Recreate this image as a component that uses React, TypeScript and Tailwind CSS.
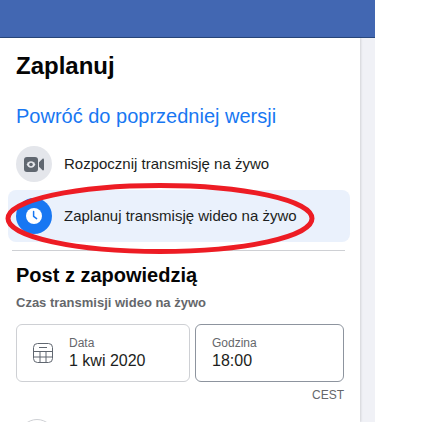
const sans = "font-['Liberation_Sans',Arial,sans-serif]";

function VideoIcon() {
  return (
    <svg width="20" height="15" viewBox="0 0 20 15" aria-hidden="true">
      <rect x="0" y="0" width="14" height="15" rx="3" fill="#606770" />
      <path fill="#e4e6eb" d="M7 4.2c-2.2 0-3.8 1.9-4.4 3.3.6 1.4 2.2 3.3 4.4 3.3s3.8-1.9 4.4-3.3C10.8 6.100 9.200 4.200 7 4.200Z" />
      <circle cx="7" cy="7.500" r="1.800" fill="#606770" />
      <path fill="#606770" d="M15 5.200 18.600 1.800c.6-.5 1.400-.1 1.400.6v10.200c0 .7-.8 1.100-1.400.6L15 9.800Z" />
    </svg>
  );
}

function ClockIcon() {
  return (
    <svg width="16" height="16" viewBox="0 0 16 16" aria-hidden="true">
      <circle cx="8" cy="8" r="8" fill="#ffffff" />
      <path d="M7.600 3.400v5l3 2.200" fill="none" stroke="#1877f2" strokeWidth="1.500" strokeLinecap="round" strokeLinejoin="round" />
    </svg>
  );
}

function CalendarIcon() {
  return (
    <svg width="20" height="20" viewBox="0 0 20 20" fill="none" stroke="#606770" strokeWidth="1" aria-hidden="true">
      <rect x="0.500" y="0.500" width="19" height="19" rx="4" />
      <path d="M6 4.500h8M0.500 8.500h19M0.500 14h19M7 8.500v11M13 8.500v11" />
    </svg>
  );
}

export default function App() {
  return (
    <div className={`${sans} h-[422px] w-[447px] overflow-hidden bg-white`}>
      <div className="h-[38px] w-[375px] border-b border-[#29487d] bg-[#4267b2]" />
      <div className="flex h-[384px] w-[375px] bg-[#f0f1f6]">
        <div className="h-full w-[360px] bg-white pl-2 shadow-[1px_0_2px_rgba(0,0,0,0.12)]">
          <h1 className="ml-2 mt-[14px] text-[24px] font-bold leading-7 text-[#050505]">Zaplanuj</h1>
          <p className="ml-2 mt-6 text-[20px] leading-6 text-[#1877f2]">Powróć do poprzedniej wersji</p>
          <div className="mt-[10px] flex h-[52px] w-[342px] items-center gap-3 pl-2">
            <div className="flex h-9 w-9 items-center justify-center rounded-full bg-[#e4e6eb]">
              <VideoIcon />
            </div>
            <span className="mt-px text-[15px] text-[#1c1e21]">Rozpocznij transmisję na żywo</span>
          </div>
          <div className="relative flex h-[52px] w-[342px] items-center gap-3 rounded-lg bg-[#eaf1fc] pl-2">
            <div className="flex h-9 w-9 items-center justify-center rounded-full bg-[#1877f2]">
              <ClockIcon />
            </div>
            <span className="mt-px text-[15px] text-[#1c1e21]">Zaplanuj transmisję wideo na żywo</span>
            <svg className="absolute -left-[3px] -top-[7px]" width="310" height="71" viewBox="0 0 310 71" aria-hidden="true">
              <ellipse cx="155" cy="35.500" rx="152" ry="33" fill="none" stroke="#ed1c24" strokeWidth="5" />
            </svg>
          </div>
          <div className="ml-1 mt-2 h-px w-[333px] bg-[#ced0d4]" />
          <h2 className="ml-2 mt-[12px] text-[20px] font-bold leading-6 text-[#050505]">Post z zapowiedzią</h2>
          <p className="ml-2 mt-2 text-[13px] font-bold leading-4 text-[#65676b]">Czas transmisji wideo na żywo</p>
          <div className="ml-2 mt-[13px] flex gap-[5px]">
            <div className="flex h-[58px] w-[174px] items-center gap-4 rounded-md border border-[#ced0d4] pl-4">
              <CalendarIcon />
              <div>
                <div className="text-[12px] leading-4 text-[#65676b]">Data</div>
                <div className="text-[16px] leading-5 text-[#1c1e21]">1 kwi 2020</div>
              </div>
            </div>
            <div className="flex h-[58px] w-[149px] flex-col justify-center rounded-md border border-[#8d949e] pl-4">
              <div className="text-[12px] leading-4 text-[#65676b]">Godzina</div>
              <div className="text-[16px] leading-5 text-[#1c1e21]">18:00</div>
            </div>
          </div>
          <div className="mt-[5px] w-[336px] text-right text-[12px] leading-4 text-[#65676b]">CEST</div>
          <div className="ml-[11px] mt-4 h-9 w-9 rounded-full border border-[#ced0d4]" />
        </div>
      </div>
    </div>
  );
}
